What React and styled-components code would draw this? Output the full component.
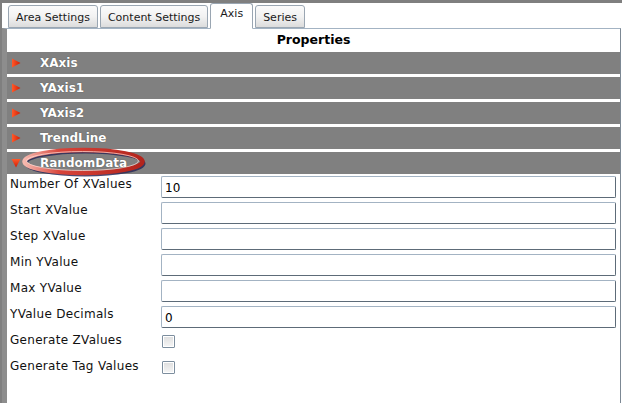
import styled, { createGlobalStyle } from "styled-components";

const GlobalStyle = createGlobalStyle`
  html, body {
    margin: 0;
    padding: 0;
    background: #ffffff;
  }
  body {
    font-family: "DejaVu Sans", Verdana, sans-serif;
    font-size: 11px;
    color: #1a1a1a;
  }
`;

const Frame = styled.div`
  display: flex;
  flex-direction: column;
  height: 403px;
  box-sizing: border-box;
  border-top: 3px solid #7f7f7f;
  border-left: 2px solid #7f7f7f;
  overflow: hidden;
`;

const TabStrip = styled.div`
  display: flex;
  align-items: flex-end;
  gap: 2px;
  height: 25px;
  padding-left: 6px;
  position: relative;
  z-index: 1;
`;

const Tab = styled.div`
  box-sizing: border-box;
  height: ${(p) => (p.active ? "26px" : "23px")};
  padding: ${(p) => (p.active ? "3px 9px 0" : "5px 7px 0")};
  margin-bottom: ${(p) => (p.active ? "-1px" : "0")};
  border: 1px solid #9aa6b2;
  border-bottom: ${(p) => (p.active ? "1px solid #ffffff" : "1px solid #9aa6b2")};
  border-radius: 3px 3px 0 0;
  background: ${(p) =>
    p.active ? "#ffffff" : "linear-gradient(#fbfbfb, #f2f2f2 50%, #dcdcdc)"};
  color: #1a1a1a;
  font-size: 11px;
  white-space: nowrap;
`;

const Panel = styled.div`
  flex: 1;
  display: flex;
  flex-direction: column;
  margin-right: 1px;
  border-top: 1px solid #a3b3c3;
  border-left: 5px solid #8d8d8d;
  border-right: 1px solid #7c8894;
`;

const Title = styled.div`
  height: 23px;
  line-height: 22px;
  text-align: center;
  font-weight: bold;
  font-size: 12.5px;
  color: #000;
`;

const Sections = styled.div`
  display: flex;
  flex-direction: column;
  gap: 3px;
`;

const SectionBar = styled.div`
  position: relative;
  display: flex;
  align-items: center;
  height: 22px;
  background: #808080;
  color: #ffffff;
  font-weight: bold;
  font-size: 12px;
`;

const Arrow = styled.svg`
  width: 10px;
  height: 10px;
  margin-left: 4px;
  flex: none;
`;

const BarLabel = styled.span`
  position: relative;
  z-index: 2;
  margin-left: 19px;
  text-shadow: 0 0 1px rgba(0, 0, 0, 0.5);
`;

const Highlight = styled.svg`
  position: absolute;
  left: 14px;
  top: -5px;
  width: 126px;
  height: 30px;
  z-index: 1;
  pointer-events: none;
`;

const Form = styled.div`
  display: grid;
  grid-template-columns: 151px 1fr;
  grid-auto-rows: 26px;
  padding: 2px 4px 0 3px;
`;

const Label = styled.div`
  padding-top: 1px;
  font-size: 12px;
  letter-spacing: 0.3px;
  white-space: nowrap;
  color: #111;
`;

const Field = styled.input`
  box-sizing: border-box;
  width: 100%;
  height: 22px;
  margin: 0;
  padding: 2px 3px 0;
  border: 1px solid #a3b3c3;
  border-right-color: #5d6b78;
  border-bottom-color: #5d6b78;
  border-radius: 2px;
  font-family: "DejaVu Sans", Verdana, sans-serif;
  font-size: 12px;
  color: #000;
  outline: none;
`;

const Check = styled.div`
  width: 11px;
  height: 11px;
  margin: 3px 0 0 1px;
  border: 1px solid #7d8e9e;
  border-radius: 1px;
  background: linear-gradient(#dedede, #f6f6f6);
  box-shadow: inset 0 0 0 1px #ffffff;
`;

const RightArrow = () => (
  <Arrow viewBox="0 0 10 10">
    <defs>
      <linearGradient id="ra" x1="0" y1="0" x2="1" y2="0">
        <stop offset="0" stopColor="#ff5a2a" />
        <stop offset="1" stopColor="#d01c04" />
      </linearGradient>
    </defs>
    <path d="M1 0.5 L9.5 5 L1 9.5 Z" fill="url(#ra)" />
  </Arrow>
);

const DownArrow = () => (
  <Arrow viewBox="0 0 10 10">
    <defs>
      <linearGradient id="da" x1="0" y1="0" x2="0" y2="1">
        <stop offset="0" stopColor="#ff5a2a" />
        <stop offset="1" stopColor="#d01c04" />
      </linearGradient>
    </defs>
    <path d="M0.5 1 L9.5 1 L5 9.5 Z" fill="url(#da)" />
  </Arrow>
);

const sections = ["XAxis", "YAxis1", "YAxis2", "TrendLine"];

const fields = [
  { label: "Number Of XValues", value: "10" },
  { label: "Start XValue", value: "" },
  { label: "Step XValue", value: "" },
  { label: "Min YValue", value: "" },
  { label: "Max YValue", value: "" },
  { label: "YValue Decimals", value: "0" },
];

const checks = ["Generate ZValues", "Generate Tag Values"];

export default function App() {
  return (
    <>
      <GlobalStyle />
      <Frame>
        <TabStrip>
          <Tab>Area Settings</Tab>
          <Tab>Content Settings</Tab>
          <Tab active>Axis</Tab>
          <Tab>Series</Tab>
        </TabStrip>
        <Panel>
          <Title>Properties</Title>
          <Sections>
            {sections.map((s) => (
              <SectionBar key={s}>
                <RightArrow />
                <BarLabel>{s}</BarLabel>
              </SectionBar>
            ))}
            <SectionBar>
              <DownArrow />
              <Highlight viewBox="0 0 126 30">
                <defs>
                  <linearGradient id="ring" x1="0" y1="0" x2="1" y2="0">
                    <stop offset="0" stopColor="#f6b8ae" />
                    <stop offset="0.3" stopColor="#d8443a" />
                    <stop offset="1" stopColor="#b3241c" />
                  </linearGradient>
                </defs>
                <ellipse cx="64" cy="16.5" rx="59" ry="11.5" fill="none" stroke="#2a2a58" strokeWidth="3" opacity="0.85" />
                <ellipse cx="62.5" cy="14.5" rx="59" ry="11.5" fill="none" stroke="url(#ring)" strokeWidth="4.5" />
                <ellipse cx="61.5" cy="14" rx="56" ry="9.5" fill="none" stroke="#ffe0d8" strokeWidth="1" opacity="0.7" />
              </Highlight>
              <BarLabel>RandomData</BarLabel>
            </SectionBar>
          </Sections>
          <Form>
            {fields.map((f) => (
              <>
                <Label key={f.label}>{f.label}</Label>
                <Field defaultValue={f.value} />
              </>
            ))}
            {checks.map((c) => (
              <>
                <Label key={c}>{c}</Label>
                <Check />
              </>
            ))}
          </Form>
        </Panel>
      </Frame>
    </>
  );
}
